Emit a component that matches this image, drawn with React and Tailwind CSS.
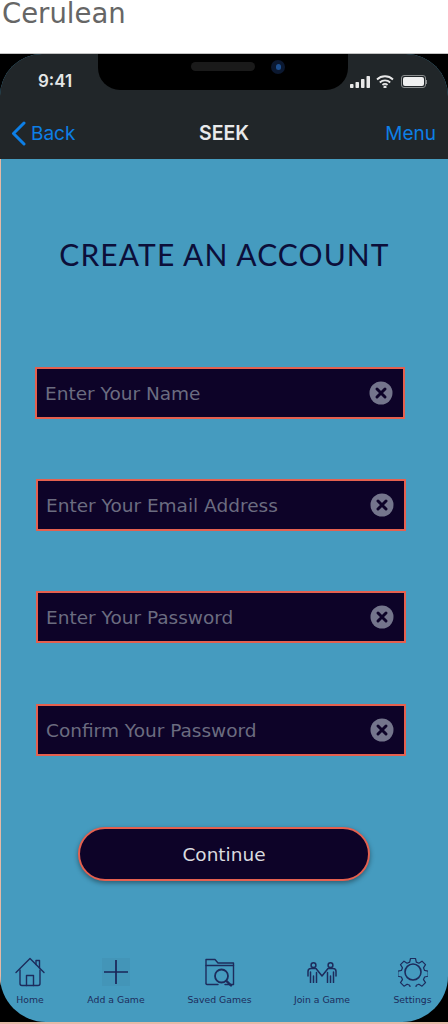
import React from "react";

const dv = "font-['DejaVu_Sans',sans-serif]";

function Field({ label, boxClass = "" }) {
  return (
    <div className={`flex items-center justify-between h-[52px] bg-[#0d0328] border-2 border-[#e4604f] pl-[8px] pr-[10px] ${boxClass}`}>
      <span className={`${dv} text-[18.500px] text-[#6b6c80] leading-none pt-[2px]`}>{label}</span>
      <svg width="24" height="24" viewBox="0 0 24 24">
        <circle cx="12" cy="12" r="11.500" fill="#74758c" />
        <path d="M8 8l8 8M16 8l-8 8" stroke="#0d0328" strokeWidth="3" strokeLinecap="round" />
      </svg>
    </div>
  );
}

const navStroke = { fill: "none", stroke: "#1d2c5c", strokeWidth: 1.4, strokeLinecap: "round", strokeLinejoin: "round" };

const HomeIcon = () => (
  <svg width="30" height="30" viewBox="0 0 30 30" {...navStroke}>
    <path d="M1 15.500L15 1.500l14 14" />
    <path d="M21 7.500V3.500h3.500v7.500" />
    <path d="M5 13v13.500a2 2 0 0 0 2 2h16a2 2 0 0 0 2-2V13" />
    <path d="M11.500 28.500V18.500h7v10" />
  </svg>
);
const PlusIcon = () => (
  <div className="w-[28px] h-[28px] bg-[#4395b8] flex items-center justify-center">
    <svg width="26" height="26" viewBox="0 0 26 26" fill="none" stroke="#1a2457" strokeWidth="1.700">
      <path d="M13 1v24M1 13h24" />
    </svg>
  </div>
);
const FolderIcon = () => (
  <svg width="30" height="30" viewBox="0 0 30 30" {...navStroke}>
    <path d="M1 26V2.500h9l3 3.500h15.500v21.500H20" />
    <path d="M1 8.500h27.500" />
    <path d="M1 26.500c0 1 .5 1 1 1h11" />
    <circle cx="16.500" cy="19" r="6.500" strokeWidth="1.800" />
    <path d="M21.500 24l4.500 4.500" strokeWidth="2.400" />
  </svg>
);
const PeopleIcon = () => (
  <svg width="30" height="21" viewBox="0 0 30 21" {...navStroke} strokeWidth="1.500">
    <circle cx="6.500" cy="3.200" r="2.400" />
    <circle cx="23.500" cy="3.200" r="2.400" />
    <path d="M1 14V9.500c0-2 1.300-3 3-3h5L15 14l6-7.500h5c1.700 0 3 1 3 3V14" />
    <path d="M3.500 10v10.500M9.500 10.500v10M6.500 14v6.500M20.500 10.500v10M26.500 10v10.500M23.500 14v6.500" />
  </svg>
);
const GearIcon = () => (
  <svg width="30" height="30" viewBox="0 0 30 30" {...navStroke} strokeWidth="1.200">
    <path d="M12.500 1.500h5l.8 3.600 2.600 1.100 3.100-2 3.500 3.500-2 3.100 1.100 2.600 3.600.8v5l-3.600.8-1.100 2.600 2 3.100-3.500 3.500-3.100-2-2.600 1.100-.8 3.600h-5l-.8-3.600-2.600-1.100-3.100 2-3.500-3.500 2-3.100-1.100-2.600-3.600-.8v-5l3.600-.8 1.100-2.600-2-3.100 3.500-3.500 3.100 2 2.600-1.100z" />
    <circle cx="15" cy="15" r="8" strokeWidth="1.600" />
  </svg>
);

function Tab({ icon, label, w }) {
  return (
    <div className={`flex flex-col items-center shrink-0 ${w}`}>
      <div className="h-[30px] flex items-center justify-center">{icon}</div>
      <span className={`${dv} text-[9.300px] leading-none mt-[8px] text-[#1d2c5c] whitespace-nowrap`}>{label}</span>
    </div>
  );
}

export default function App() {
  return (
    <div className="w-[448px] h-[1024px] bg-white overflow-hidden flex flex-col">
      <div className={`${dv} h-[53px] pl-[2px] text-[27.500px] leading-[27px] text-[#666666] shrink-0`}>Cerulean</div>
      <div className="h-[969px] bg-black border-t border-[#c4c4c4] shrink-0">
        <div className="relative h-full rounded-t-[42px] rounded-b-[46px] bg-[#459bbf] overflow-hidden flex flex-col">
          <header className="h-[105px] bg-[#212629] shrink-0 flex flex-col">
            <div className="absolute left-[98px] top-0 w-[250px] h-[36px] bg-black rounded-b-[22px] flex">
              <div className="w-[64px] h-[9px] mt-[8px] ml-[93px] rounded-full bg-[#1a1a1a]" />
              <div className="w-[14px] h-[14px] mt-[6px] ml-[16px] rounded-full bg-[#0b1830] flex items-center justify-center">
                <div className="w-[5px] h-[6px] rounded-full bg-[#1d4f8f]" />
              </div>
            </div>
            <div className="h-[54px] flex items-start justify-between pt-[16px] pl-[38px] pr-[21px]">
              <span className="font-['Inter',sans-serif] font-semibold text-[17px] leading-[22px] text-[#e4e6e7]">9:41</span>
              <div className="flex items-center gap-[6px] pt-[5px]">
                <svg width="20" height="13" viewBox="0 0 20 13" fill="#e8e8e8">
                  <rect x="0" y="9" width="3.500" height="4" rx=".8" />
                  <rect x="5.500" y="7" width="3.500" height="6" rx=".8" />
                  <rect x="11" y="4" width="3.500" height="9" rx=".8" />
                  <rect x="16.500" y="1" width="3.500" height="12" rx=".8" />
                </svg>
                <svg width="18" height="13" viewBox="0 0 18 13" fill="none" stroke="#e8e8e8" strokeWidth="1.800">
                  <path d="M1 4.500a11.500 11.500 0 0 1 16 0M3.800 7.500a7.500 7.500 0 0 1 10.400 0M6.500 10a3.500 3.500 0 0 1 5 0" />
                  <circle cx="9" cy="12" r=".7" fill="#e8e8e8" />
                </svg>
                <div className="flex items-center ml-[1px]">
                  <div className="w-[25px] h-[13px] rounded-[3px] border border-[#8a8d8e] p-[1px]">
                    <div className="w-full h-full rounded-[2px] bg-[#f0f0f0]" />
                  </div>
                  <div className="w-[1px] h-[4px] bg-[#8a8d8e]" />
                </div>
              </div>
            </div>
            <div className="relative flex-1 flex items-center justify-between pl-[11px] pr-[12px] font-['Inter',sans-serif]">
              <div className="flex items-center gap-[5px]">
                <svg width="15" height="25" viewBox="0 0 15 25" fill="none" stroke="#0d7fe6" strokeWidth="3" strokeLinecap="round" strokeLinejoin="round">
                  <path d="M13 2L2.500 12.500 13 23" />
                </svg>
                <span className="text-[19px] leading-none text-[#0d7fe6]">Back</span>
              </div>
              <span className="absolute left-0 right-0 text-center text-[19.500px] font-semibold leading-none text-[#e8e9ea] pointer-events-none">SEEK</span>
              <span className="text-[19px] leading-none text-[#0d7fe6]">Menu</span>
            </div>
          </header>

          <main className="flex-1 flex flex-col border-l border-[#e6b9a6]">
            <h1 className="font-['Lato',sans-serif] font-normal text-[30px] leading-[36px] text-center text-[#0c0f3a] tracking-[1.100px] mt-[77px]">CREATE AN ACCOUNT</h1>
            <div className="mt-[95px] flex flex-col gap-[60px] pl-[34px] pr-[43px]">
              <Field label="Enter Your Name" />
              <Field label="Enter Your Email Address" boxClass="ml-[1px] -mr-[1px]" />
              <Field label="Enter Your Password" boxClass="ml-[1px] -mr-[1px]" />
              <Field label="Confirm Your Password" boxClass="ml-[1px] -mr-[1px] mt-[1px]" />
            </div>
            <div className="mt-[71px] pl-[77px]">
              <div className={`${dv} w-[292px] h-[54px] rounded-full bg-[#0d0328] border-2 border-[#e4604f] shadow-[0_2px_5px_rgba(0,0,0,0.4)] flex items-center justify-center pt-[2px] text-[18.500px] text-[#d9dadf] leading-none`}>
                Continue
              </div>
            </div>
          </main>

          <nav className="absolute left-0 top-[903px] flex">
            <Tab icon={<HomeIcon />} label="Home" w="w-[60px]" />
            <Tab icon={<PlusIcon />} label="Add a Game" w="w-[112px]" />
            <Tab icon={<FolderIcon />} label="Saved Games" w="w-[95px]" />
            <Tab icon={<PeopleIcon />} label="Join a Game" w="w-[110px]" />
            <Tab icon={<GearIcon />} label="Settings" w="w-[71px]" />
          </nav>
        </div>
      </div>
      <div className="h-[2px] bg-[#e6b9a6] shrink-0" />
    </div>
  );
}
